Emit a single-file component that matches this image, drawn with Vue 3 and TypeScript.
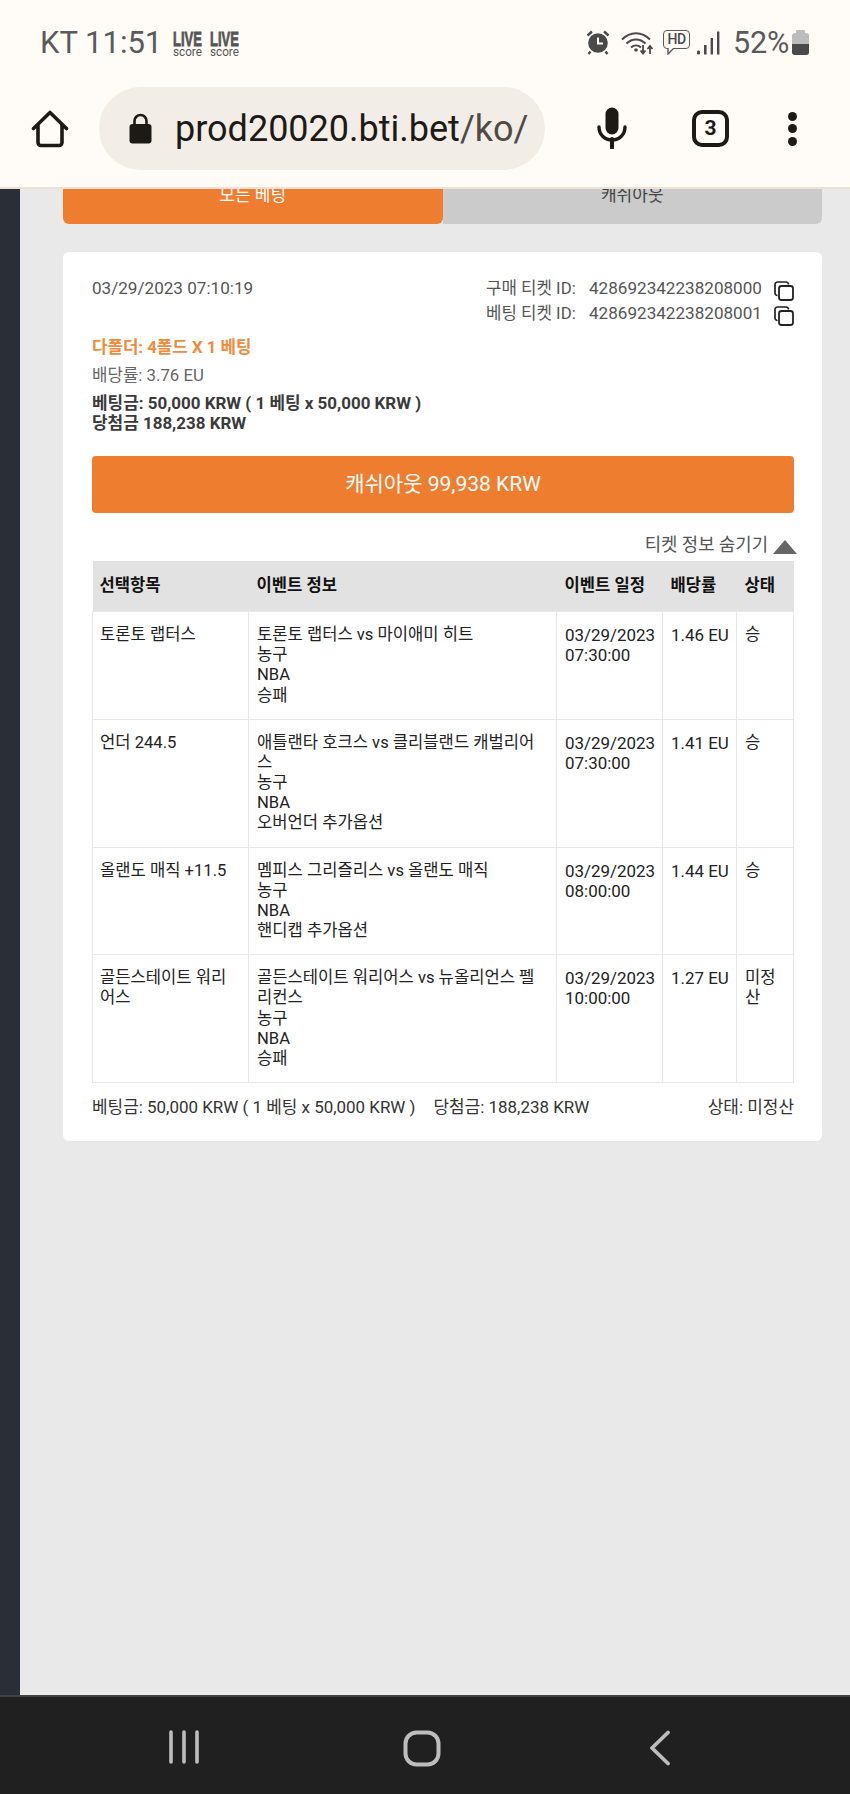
<script setup lang="ts">
interface Row {
  pick: string[];
  event: string[];
  time: string[];
  odds: string;
  status: string[];
}

const rows: Row[] = [
  {
    pick: ['토론토 랩터스'],
    event: ['토론토 랩터스 vs 마이애미 히트', '농구', 'NBA', '승패'],
    time: ['03/29/2023', '07:30:00'],
    odds: '1.46 EU',
    status: ['승'],
  },
  {
    pick: ['언더 244.5'],
    event: ['애틀랜타 호크스 vs 클리블랜드 캐벌리어', '스', '농구', 'NBA', '오버언더 추가옵션'],
    time: ['03/29/2023', '07:30:00'],
    odds: '1.41 EU',
    status: ['승'],
  },
  {
    pick: ['올랜도 매직 +11.5'],
    event: ['멤피스 그리즐리스 vs 올랜도 매직', '농구', 'NBA', '핸디캡 추가옵션'],
    time: ['03/29/2023', '08:00:00'],
    odds: '1.44 EU',
    status: ['승'],
  },
  {
    pick: ['골든스테이트 워리', '어스'],
    event: ['골든스테이트 워리어스 vs 뉴올리언스 펠', '리컨스', '농구', 'NBA', '승패'],
    time: ['03/29/2023', '10:00:00'],
    odds: '1.27 EU',
    status: ['미정', '산'],
  },
];

const ids = [
  { label: '구매 티켓 ID:', value: '428692342238208000' },
  { label: '베팅 티켓 ID:', value: '428692342238208001' },
];
</script>

<template>
  <div class="screen">
    <header class="chrome">
      <div class="status">
        <div class="status-left">
          <span class="clock">KT 11:51</span>
          <svg v-for="n in 2" :key="n" class="live" width="30" height="40" viewBox="0 0 30 40">
            <text class="live-big" transform="translate(0 22.5) scale(1 1.55)">LIVE</text>
            <text class="live-small" transform="translate(0 33) scale(1 1.1)">score</text>
          </svg>
        </div>
        <div class="status-right">
          <svg class="i-alarm" width="24" height="25" viewBox="0 0 24 25">
            <circle cx="12" cy="13" r="9.8" fill="#4a4a4a" />
            <path d="M12 7.5V13.5H17" fill="none" stroke="#fffcf8" stroke-width="2" />
            <path d="M1.5 5.5L6 1.5M22.5 5.5L18 1.5M4.5 21.5L2.5 24M19.5 21.5L21.5 24" stroke="#4a4a4a" stroke-width="2.4" fill="none" />
          </svg>
          <svg class="i-wifi" width="33" height="25" viewBox="0 0 33 25">
            <path d="M1 9.5C9 1 21 1 29 9.5M5.5 13.5C11 8 19 8 24.5 13.5M10 17.5C13 14.8 17 14.8 20 17.5" fill="none" stroke="#4a4a4a" stroke-width="2" />
            <circle cx="15" cy="20" r="1.8" fill="#4a4a4a" />
            <path d="M22 15V23M19.5 20.5L22 23.5L24.5 20.5M29 24V16M26.5 19L29 16L31.5 19" fill="none" stroke="#4a4a4a" stroke-width="1.8" />
          </svg>
          <span class="hd">
            <span class="hd-text">HD</span>
            <svg class="hd-tail" width="9" height="7" viewBox="0 0 9 7"><path d="M1 0V6L7 0" fill="#fffcf8" stroke="#5a5a5a" stroke-width="1.4" /></svg>
          </span>
          <svg class="i-signal" width="23" height="24" viewBox="0 0 23 24">
            <rect x="0" y="19.5" width="3" height="4" rx="1.2" fill="#4a4a4a" />
            <rect x="7" y="14" width="2.6" height="9.5" fill="#4a4a4a" />
            <rect x="13.6" y="7" width="2.4" height="16.5" fill="#4a4a4a" />
            <rect x="20" y="0.5" width="2.4" height="23" fill="#4a4a4a" />
          </svg>
          <span class="battery-pct">52%</span>
          <span class="battery"><span class="battery-fill"></span></span>
        </div>
      </div>
      <div class="toolbar">
        <svg class="i-home" width="38" height="38" viewBox="0 0 38 38">
          <path d="M2.5 18.5L19 2.5L35.5 18.5M7 15V32.5A3 3 0 0 0 10 35.5H28A3 3 0 0 0 31 32.5V15" fill="none" stroke="#1d1a16" stroke-width="3.6" stroke-linejoin="round" stroke-linecap="round" />
        </svg>
        <div class="pill">
          <svg class="i-lock" width="23" height="31" viewBox="0 0 23 31">
            <path d="M5.5 12V8a6 6 0 0 1 12 0v4" fill="none" stroke="#1d1a16" stroke-width="2.6" />
            <rect x="0.5" y="11" width="22" height="19.5" rx="3" fill="#1d1a16" />
          </svg>
          <span class="url">prod20020.bti.bet<span class="url-path">/ko/</span></span>
        </div>
        <svg class="i-mic" width="30" height="42" viewBox="0 0 30 42">
          <rect x="8.5" y="0.5" width="13" height="27" rx="6.5" fill="#1d1a16" />
          <path d="M2 20C2 28 8 33 15 33S28 28 28 20" fill="none" stroke="#1d1a16" stroke-width="3.4" stroke-linecap="round" />
          <path d="M15 32V41" stroke="#1d1a16" stroke-width="4" stroke-linecap="round" />
        </svg>
        <span class="tab-count">3</span>
        <span class="dots"><i></i><i></i><i></i></span>
      </div>
    </header>

    <div class="body">
      <aside class="rail"></aside>
      <main class="content">
        <div class="tabs">
          <div class="tab tab-on">모든 베팅</div>
          <div class="tab tab-off">캐쉬아웃</div>
        </div>

        <section class="card">
          <div class="meta">
            <span class="num">03/29/2023 07:10:19</span>
            <div class="ids">
              <div v-for="id in ids" :key="id.value" class="id-row">
                <span class="id-label">{{ id.label }}</span>
                <span class="id-value num">{{ id.value }}</span>
                <svg width="20" height="20" viewBox="0 0 20 20">
                  <path d="M3.5 14.5A2.5 2.5 0 0 1 1 12V3.5A2.5 2.5 0 0 1 3.5 1H12A2.5 2.5 0 0 1 14.5 3.5" fill="none" stroke="#222" stroke-width="1.7" />
                  <rect x="5" y="5" width="14" height="14" rx="2.5" fill="#fff" stroke="#222" stroke-width="1.8" />
                </svg>
              </div>
            </div>
          </div>

          <div class="bet-type">다폴더: 4폴드 X 1 베팅</div>
          <div class="bet-odds">배당률: 3.76 EU</div>
          <div class="bet-sum">베팅금: 50,000 KRW ( 1 베팅 x 50,000 KRW )<br />당첨금 188,238 KRW</div>

          <div class="cashout">캐쉬아웃 99,938 KRW</div>

          <div class="toggle">
            <span>티켓 정보 숨기기</span>
            <span class="arrow"></span>
          </div>

          <table class="bets">
            <colgroup>
              <col class="c1" /><col class="c2" /><col class="c3" /><col class="c4" /><col class="c5" />
            </colgroup>
            <thead>
              <tr>
                <th>선택항목</th>
                <th>이벤트 정보</th>
                <th>이벤트 일정</th>
                <th>배당률</th>
                <th>상태</th>
              </tr>
            </thead>
            <tbody>
              <tr v-for="r in rows" :key="r.pick[0]">
                <td><div v-for="l in r.pick" :key="l">{{ l }}</div></td>
                <td><div v-for="l in r.event" :key="l">{{ l }}</div></td>
                <td class="cell-num"><div v-for="l in r.time" :key="l">{{ l }}</div></td>
                <td class="cell-num">{{ r.odds }}</td>
                <td><div v-for="l in r.status" :key="l">{{ l }}</div></td>
              </tr>
            </tbody>
          </table>

          <div class="summary">
            <div class="summary-left">
              <span>베팅금: 50,000 KRW ( 1 베팅 x 50,000 KRW )</span>
              <span>당첨금: 188,238 KRW</span>
            </div>
            <span>상태: 미정산</span>
          </div>
        </section>
      </main>
    </div>

    <footer class="nav">
      <svg width="32" height="34" viewBox="0 0 32 34">
        <path d="M3 2V32M16 2V32M29 2V32" stroke="#bdbdbd" stroke-width="3.6" stroke-linecap="round" />
      </svg>
      <svg width="38" height="37" viewBox="0 0 38 37">
        <rect x="2.5" y="2.5" width="33" height="32" rx="11" fill="none" stroke="#bdbdbd" stroke-width="4" />
      </svg>
      <svg width="22" height="36" viewBox="0 0 22 36">
        <path d="M19 2.5L3 18L19 33.5" fill="none" stroke="#bdbdbd" stroke-width="3.8" stroke-linecap="round" stroke-linejoin="round" />
      </svg>
    </footer>
  </div>
</template>

<style>
html, body { margin: 0; padding: 0; }
</style>

<style scoped>
.screen {
  width: 850px;
  height: 1794px;
  display: flex;
  flex-direction: column;
  overflow: hidden;
  font-family: Roboto, "Noto Sans CJK KR", sans-serif;
  background: #e9e9e9;
}

/* browser chrome */
.chrome {
  position: relative;
  z-index: 2;
  flex: none;
  height: 187px;
  background: #fffcf8;
  border-bottom: 2px solid #f0dfd4;
  box-sizing: content-box;
}
.status {
  height: 87px;
  display: flex;
  justify-content: space-between;
  align-items: flex-start;
  padding: 0 41px 0 40px;
  color: #5a5a5a;
}
.status-left { display: flex; align-items: center; height: 85px; }
.clock { font-size: 31px; line-height: 85px; width: 133px; white-space: nowrap; }
.live { flex: none; margin-right: 7px; }
.live-big {
  font: 700 13px "Liberation Sans", sans-serif;
  fill: #555;
  stroke: #555;
  stroke-width: 0.5px;
}
.live-small {
  font: 400 11.7px Roboto, sans-serif;
  fill: #555;
}
.status-right { display: flex; align-items: center; height: 85px; }
.i-alarm { margin-right: 11px; }
.i-wifi { margin-right: 9px; }
.hd { position: relative; margin-right: 7px; width: 27px; height: 23px; top: -1px; }
.hd-text {
  display: block;
  width: 25px;
  height: 17px;
  border: 1.4px solid #5a5a5a;
  border-radius: 4px;
  font: 500 14px/17px Roboto, sans-serif;
  text-align: center;
  letter-spacing: -0.5px;
  color: #4a4a4a;
  box-sizing: content-box;
}
.hd-tail { position: absolute; left: 4px; top: 18px; }
.i-signal { margin-right: 13px; }
.battery-pct { font-size: 30.5px; width: 59px; white-space: nowrap; letter-spacing: -0.2px; }
.battery {
  position: relative;
  width: 17px;
  height: 22px;
  border-radius: 3px;
  background: #bcbcbc;
  margin-top: 3px;
}
.battery::before {
  content: "";
  position: absolute;
  left: 4px;
  top: -3px;
  width: 9px;
  height: 3px;
  background: #bcbcbc;
  border-radius: 1px 1px 0 0;
}
.battery-fill {
  position: absolute;
  left: 0;
  right: 0;
  bottom: 0;
  height: 11px;
  background: #4a4a4a;
  border-radius: 0 0 3px 3px;
}
.toolbar {
  height: 83px;
  display: flex;
  align-items: center;
  padding-left: 31px;
}
.i-home { flex: none; margin-right: 30px; }
.pill {
  flex: none;
  width: 446px;
  height: 83px;
  border-radius: 42px;
  background: #f2ede6;
  display: flex;
  align-items: center;
  padding-left: 30px;
  box-sizing: border-box;
}
.i-lock { flex: none; margin-right: 23px; }
.url { font-size: 36px; color: #1d1a16; white-space: nowrap; line-height: 1; }
.url-path { color: #4f4a42; }
.i-mic { flex: none; margin-left: 52px; margin-top: -2px; }
.tab-count {
  flex: none;
  margin-left: 65px;
  width: 37px;
  height: 37px;
  border: 4px solid #1d1a16;
  border-radius: 10px;
  box-sizing: border-box;
  font: 700 21px/29px Roboto, sans-serif;
  text-align: center;
  color: #1d1a16;
}
.dots {
  flex: none;
  margin-left: 59px;
  display: flex;
  flex-direction: column;
  gap: 3.5px;
}
.dots i {
  display: block;
  width: 9px;
  height: 9px;
  border-radius: 50%;
  background: #1d1a16;
}

/* page */
.body {
  flex: 1;
  display: flex;
  min-height: 0;
}
.rail {
  flex: none;
  width: 20px;
  background: #292e37;
}
.content {
  flex: 1;
  padding: 0 28px 0 43px;
  margin-top: -23px;
  min-width: 0;
}
.tabs { display: flex; height: 58px; }
.tab {
  flex: 1;
  text-align: center;
  font-size: 17px;
  line-height: 58px;
}
.tab-on { background: #ef7d2f; color: #fff; border-radius: 0 0 6px 6px; }
.tab-off { background: #cbcbcb; color: #444; border-radius: 0 0 6px 0; }
.card {
  margin-top: 28px;
  background: #fff;
  border-radius: 6px;
  padding: 26px 28px 0 29px;
  height: 889px;
  box-sizing: border-box;
  font-size: 16.8px;
  line-height: 20px;
  color: #555;
}
.num { font-size: 17.1px; }
.meta {
  display: flex;
  justify-content: space-between;
  height: 50px;
}
.ids { display: flex; flex-direction: column; gap: 5px; }
.id-row { display: flex; align-items: flex-start; height: 20px; }
.id-label { width: 103px; white-space: nowrap; }
.id-value { width: 185px; white-space: nowrap; }
.id-row svg { margin-top: 3px; }
.bet-type {
  margin-top: 9px;
  color: #f08a3c;
  font-weight: 700;
}
.bet-odds { margin-top: 8px; color: #666; }
.bet-sum { margin-top: 8px; font-weight: 700; color: #3a3a3a; font-size: 16.95px; }
.cashout {
  margin-top: 23px;
  height: 57px;
  line-height: 57px;
  border-radius: 4px;
  background: #ef7d2f;
  color: #fff;
  text-align: center;
  font-size: 21px;
}
.toggle {
  margin-top: 22px;
  height: 20px;
  display: flex;
  justify-content: flex-end;
  align-items: center;
  font-size: 17.8px;
  color: #555;
  margin-right: -3px;
}
.arrow {
  margin-left: 5px;
  margin-top: 3px;
  width: 0;
  height: 0;
  border-left: 12px solid transparent;
  border-right: 12px solid transparent;
  border-bottom: 14px solid #666;
}
.bets {
  margin-top: 6px;
  width: 701px;
  table-layout: fixed;
  border-collapse: collapse;
  font-size: 16.6px;
  line-height: 20.16px;
  color: #222;
}
.c1 { width: 156px; }
.c2 { width: 308px; }
.c3 { width: 106px; }
.c4 { width: 74px; }
.c5 { width: 57px; }
.bets th {
  background: #e2e2e2;
  font-weight: 700;
  text-align: left;
  color: #111;
  padding: 15px 8px;
  white-space: nowrap;
}
.bets th:first-child,
.bets td:first-child { padding-left: 7px; }
.bets td {
  border: 1px solid #e8e8e8;
  padding: 13px 8px;
  vertical-align: top;
  white-space: nowrap;
}
.bets td.cell-num { font-size: 16.95px; }
.summary {
  margin-top: 14px;
  font-size: 16.95px;
  display: flex;
  justify-content: space-between;
  color: #333;
  white-space: nowrap;
}
.summary-left { display: flex; gap: 18px; }

/* android nav */
.nav {
  flex: none;
  position: relative;
  z-index: 2;
  height: 97px;
  background: #202020;
  border-top: 2px solid #444;
  display: flex;
  align-items: center;
  box-sizing: content-box;
}
.nav svg { position: absolute; top: 33px; }
.nav svg:nth-child(1) { left: 168px; }
.nav svg:nth-child(2) { left: 403px; }
.nav svg:nth-child(3) { left: 649px; }
</style>
